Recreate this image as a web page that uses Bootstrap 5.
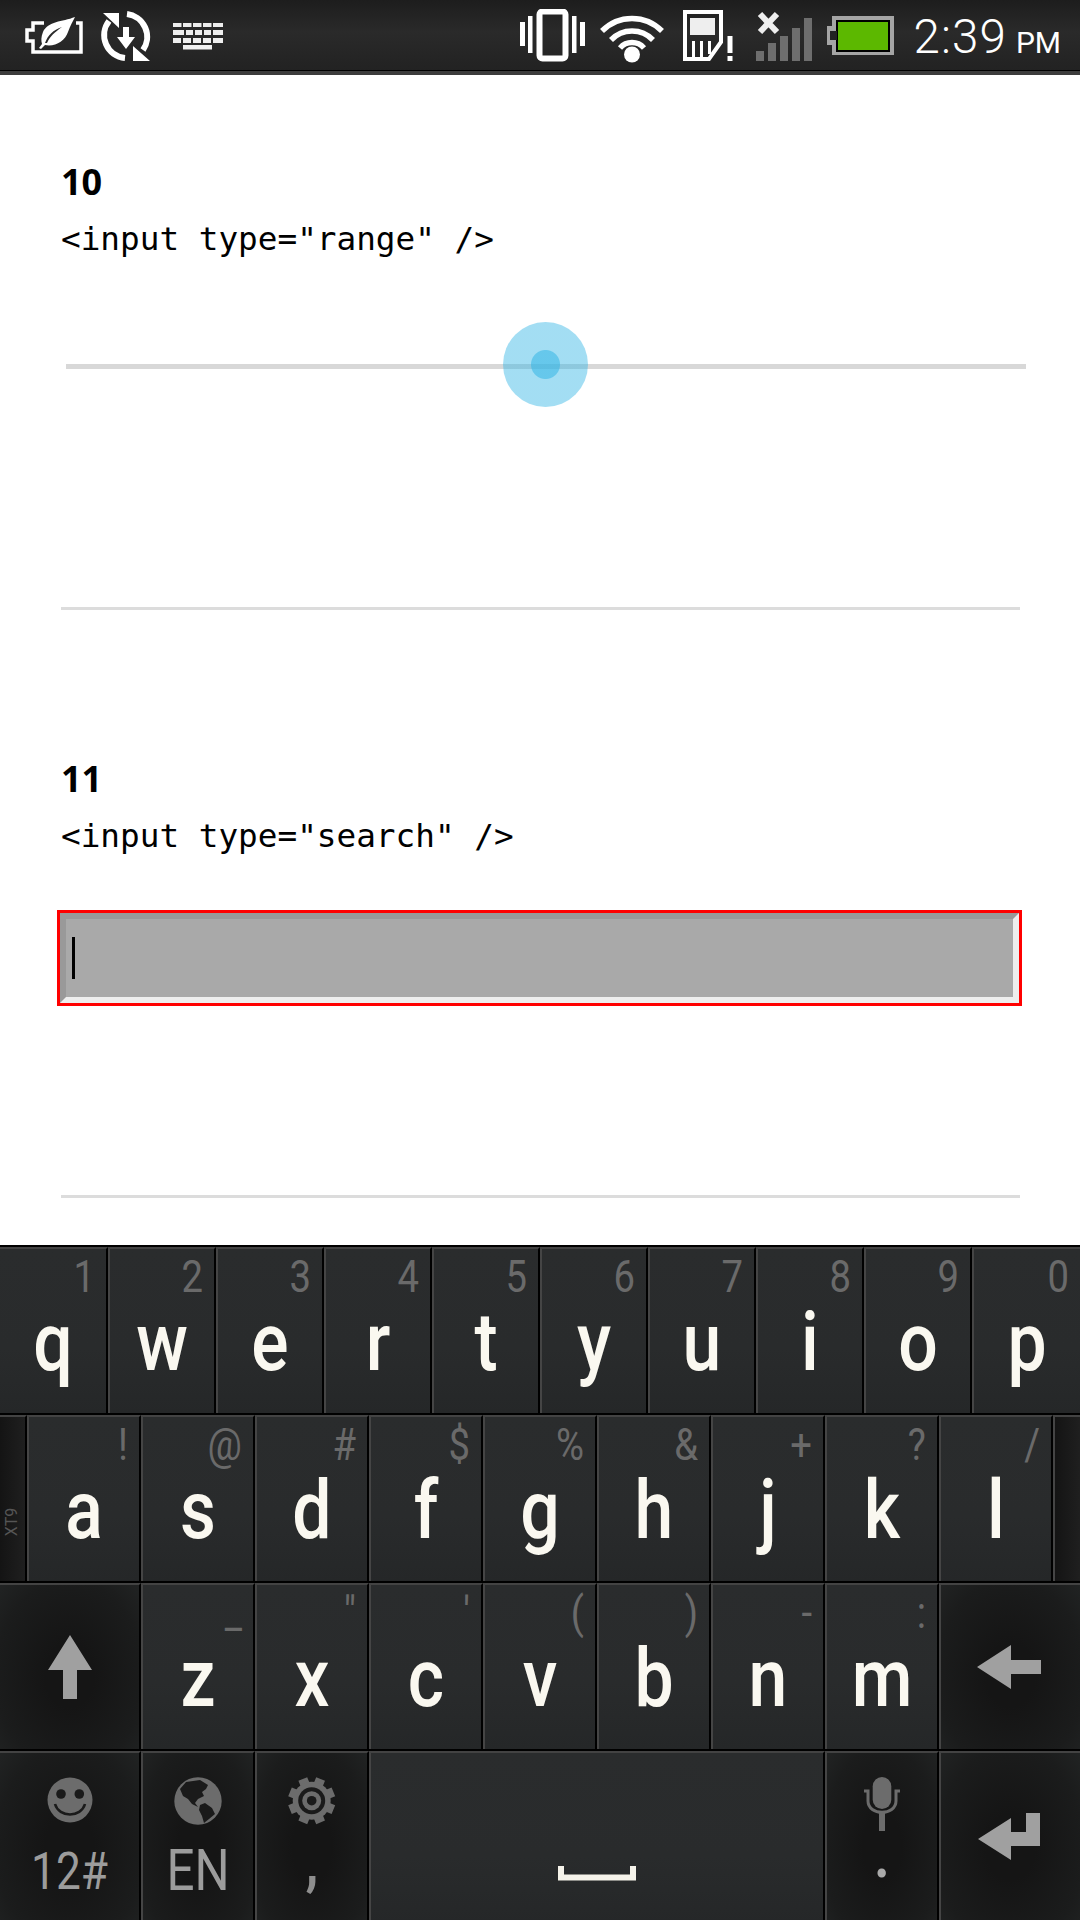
<!DOCTYPE html>
<html lang="en">
  <head>
    <meta charset="UTF-8" />
    <meta name="viewport" content="width=device-width, initial-scale=1.0" />
    <title>Input types</title>
    <link
      href="https://cdn.jsdelivr.net/npm/bootstrap@5.3.0/dist/css/bootstrap.min.css"
      rel="stylesheet"
    />
    <style>
      body {
        background: #fff;
      }
      .phone {
        width: 1080px;
        height: 1920px;
        overflow: hidden;
      }
      /* status bar */
      .sbar {
        height: 75px;
        flex: none;
        background: linear-gradient(#1d1d1d, #2a2a2a 45%, #222 100%);
        border-bottom: 4px solid #3c3c3c;
        box-shadow: inset 0 -1px 0 #000;
        position: relative;
      }
      .sbar svg {
        display: block;
        flex: none;
      }
      .ic-leaf { margin-left: 24px; }
      .ic-sync { margin-left: 15px; }
      .ic-keys { margin-left: 21px; }
      .ic-wifi { margin-left: 14px; }
      .ic-sim { margin-left: 18px; }
      .ic-signal { margin-left: 22px; }
      .ic-batt { margin-left: 14px; }
      .sbar-time {
        font-family: Roboto, sans-serif;
        font-weight: 300;
        font-size: 47.5px;
        letter-spacing: 1.1px;
        line-height: 1;
        color: #fff;
        margin-left: 18px;
        margin-right: 19px;
        white-space: nowrap;
        padding-top: 5px;
      }
      .sbar-time small {
        font-size: 30px;
        font-weight: 400;
        letter-spacing: 0;
        margin-left: 9px;
      }
      /* page content */
      .pg-body {
        padding-left: 61px;
        height: 1170px;
        flex: none;
      }
      .sec-num {
        font: 700 36px/44px "Open Sans", sans-serif;
        color: #000;
        margin: 0;
      }
      .sec-code {
        font: 400 32.7px/44px "DejaVu Sans Mono", monospace;
        color: #000;
        margin: 12.5px 0 0;
      }
      .first-num {
        padding-top: 85px;
      }
      .next-num {
        padding-top: 147px;
      }
      .rule {
        width: 959px;
        height: 3px;
        background: #dcdcdc;
        border: 0;
        opacity: 1;
        margin: 0;
      }
      .range-demo {
        -webkit-appearance: none;
        appearance: none;
        display: block;
        width: 960px;
        height: 88px;
        margin: 61.5px 0 197px 5px;
        background: transparent;
      }
      .range-demo::-webkit-slider-runnable-track {
        height: 5px;
        background: #d8d8d8;
      }
      .range-demo::-webkit-slider-thumb {
        -webkit-appearance: none;
        width: 85px;
        height: 85px;
        margin-top: -41.5px;
        border-radius: 50%;
        background: radial-gradient(
          circle,
          rgba(51, 181, 229, 0.75) 14px,
          rgba(51, 181, 229, 0.45) 15px
        );
      }
      .srch-wrap {
        width: 965px;
        height: 96px;
        margin: 52.5px 0 189px -4px;
        border: 3px solid #f00;
        position: relative;
      }
      .srch-input {
        display: block;
        width: 100%;
        height: 100%;
        border-width: 6px;
        border-style: solid;
        border-color: #999 #eee #eee #999;
        border-radius: 0;
        background: #a9a9a9;
      }
      .srch-caret {
        position: absolute;
        left: 12px;
        top: 24px;
        width: 3px;
        height: 42px;
        background: #000;
      }
      /* keyboard */
      .kbd {
        flex: none;
        font-family: Roboto, sans-serif;
        background: #000;
      }
      .kbd-row {
        border-top: 2px solid #000;
        height: 168px;
      }
      .kbd-row:last-child {
        height: 175px;
      }
      .kkey {
        flex: none;
        width: 114px;
        border-left: 2px solid #454545;
        border-right: 2px solid #000;
        border-top: 2px solid #434343;
        background: linear-gradient(#2a2c2d, #292b2c 60%, #252728);
        overflow: hidden;
      }
      .kbd-row:first-child .kkey {
        width: 108px;
      }
      .kkey:first-child {
        border-left: 0;
      }
      .kkey:last-child {
        border-right: 0;
      }
      .kkey-fn {
        background: radial-gradient(
          ellipse at 50% 55%,
          #151515 25%,
          #1b1c1c 75%,
          #212323 100%
        );
      }
      .kkey-wide {
        width: 141px !important;
      }
      .kkey-stub {
        width: 27px !important;
        background: linear-gradient(90deg, #141414, #1f1f1f);
      }
      .kkey-space {
        width: 456px !important;
      }
      .xt9-tag {
        font-size: 16px;
        color: #555;
        transform: rotate(-90deg);
        line-height: 1;
        white-space: nowrap;
        margin-bottom: 51px;
      }
      .khint {
        display: block;
        font-weight: 400;
        font-size: 45px;
        line-height: 1;
        height: 45px;
        margin-top: 5px;
        padding-right: 13px;
        text-align: right;
        color: #6a6a6a;
        transform: scaleX(0.85);
        transform-origin: right;
      }
      .kmain {
        display: block;
        font-size: 82px;
        font-weight: 500;
        line-height: 1;
        margin-top: 2px;
        text-align: center;
        color: #faf8f0;
        transform: scaleX(0.85);
      }
      .kfn-ico {
        display: block;
        margin: 24px auto 0;
      }
      .kfn-lbl {
        display: block;
        text-align: center;
        color: #9c9c9c;
        line-height: 1;
        font-weight: 400;
        transform: scaleX(0.85);
      }
      .lbl-num {
        font-size: 52px;
        margin-top: 23px;
      }
      .lbl-en {
        font-size: 58px;
        margin-top: 16px;
      }
      .lbl-punct {
        font-size: 62px;
        font-weight: 700;
        margin-top: 6px;
        color: #8e8e8e;
      }
      .lbl-dot {
        font-size: 62px;
        font-weight: 700;
        margin-top: -6px;
        color: #aaa;
      }
      .ic-space {
        margin-bottom: 43px;
      }
      .ic-back {
        margin-right: 4px;
      }
      .ic-enter {
        margin-right: 4px;
        margin-bottom: 5px;
      }
    </style>
  </head>
  <body class="m-0">
    <div class="phone d-flex flex-column">
      <div class="sbar d-flex align-items-center">
        <svg class="ic-leaf" width="61" height="52" viewBox="24 11 61 52">
          <path d="M44 24H33V31H27V42H33V53H81V24H76" fill="none" stroke="#fff" stroke-width="3.5" />
          <path d="M75 18C62 23 48 22 43 33C41 38 41 42 42 45L39 49L41 50L45 46C55 48 65 42 68 33C70 27 73 22 75 18Z" fill="#fff" />
          <path d="M45 44C48 36 53 31 62 28C55 33 50 37 47 44Z" fill="#2a2a2a" />
        </svg>
        <svg class="ic-sync" width="52" height="52" viewBox="100 11 52 52">
          <g fill="none" stroke="#fff" stroke-width="6">
            <path d="M125 59A23 23 0 0 1 109 22" />
            <path d="M127 15A23 23 0 0 1 143 51" />
          </g>
          <path d="M103 14H119V29Z M150 62H133V47Z" fill="#fff" />
          <path d="M123 28H129V38H135L126 50L117 38H123Z" fill="#fff" />
        </svg>
        <svg class="ic-keys" width="50" height="28" viewBox="173 24 50 28">
          <g fill="#eee">
            <rect x="173" y="25" width="8.5" height="4" /><rect x="183" y="25" width="8.5" height="4" /><rect x="193" y="25" width="8.5" height="4" /><rect x="203" y="25" width="8.5" height="4" /><rect x="213" y="25" width="10" height="4" />
            <rect x="173" y="32" width="11" height="5" /><rect x="186" y="32" width="7" height="5" /><rect x="195" y="32" width="7" height="5" /><rect x="204" y="32" width="7" height="5" /><rect x="213" y="32" width="10" height="5" />
            <rect x="173" y="40" width="8" height="5" /><rect x="183" y="40" width="8" height="5" /><rect x="193" y="40" width="8" height="5" /><rect x="203" y="40" width="8" height="5" /><rect x="213" y="40" width="10" height="5" />
            <rect x="183" y="47" width="29" height="4.5" />
          </g>
        </svg>
        <svg class="ms-auto" width="65" height="53" viewBox="521 12 65 53">
          <rect x="540.5" y="14.5" width="26" height="47" rx="3" fill="none" stroke="#fff" stroke-width="6" />
          <g fill="#fff">
            <rect x="521" y="25" width="5" height="24" /><rect x="529" y="19" width="4.5" height="37" />
            <rect x="573" y="19" width="4.5" height="37" /><rect x="581" y="25" width="5" height="24" />
          </g>
        </svg>
        <svg class="ic-wifi" width="66" height="54" viewBox="599 10 66 54">
          <g fill="none" stroke="#fff" stroke-width="5.5">
            <path d="M602 32A42 42 0 0 1 662 32" />
            <path d="M611 41A29 29 0 0 1 653 41" />
            <path d="M620 49A16 16 0 0 1 644 49" />
          </g>
          <circle cx="632" cy="55.5" r="8" fill="#fff" />
        </svg>
        <svg class="ic-sim" width="51" height="53" viewBox="683 11 51 53">
          <path d="M685 14H721V44L709 61H685Z" fill="none" stroke="#fff" stroke-width="4" />
          <rect x="690" y="20" width="25" height="17" fill="#eee" />
          <g fill="#fff">
            <rect x="692" y="43" width="3" height="17" /><rect x="700" y="43" width="3" height="17" /><rect x="708" y="43" width="3" height="13" />
            <rect x="727.5" y="38" width="5" height="17" /><rect x="727.5" y="58" width="5" height="5" />
          </g>
        </svg>
        <svg class="ic-signal" width="57" height="52" viewBox="756 10 57 52">
          <g fill="#6e6e6e">
            <rect x="756" y="51" width="8" height="10" /><rect x="768" y="43" width="8" height="18" /><rect x="780" y="36" width="8" height="25" /><rect x="792" y="28" width="8" height="33" /><rect x="804" y="18" width="8" height="43" />
          </g>
          <path d="M760 14L777 32M777 14L760 32" stroke="#eee" stroke-width="6" fill="none" />
        </svg>
        <svg class="ic-batt" width="68" height="40" viewBox="827 18 68 40">
          <path d="M832 18H894V57H832V47H827V28H832Z" fill="#a5a5a5" />
          <rect x="836" y="22" width="54" height="32" fill="#000" />
          <rect x="830" y="33" width="7" height="9" fill="#222" />
          <rect x="838" y="24" width="50" height="28" fill="#5cb800" />
        </svg>
        <div class="sbar-time">2:39<small>PM</small></div>
      </div>

      <div class="pg-body">
        <section>
          <h2 class="sec-num first-num">10</h2>
          <p class="sec-code">&lt;input type="range" /&gt;</p>
          <input class="range-demo" type="range" min="0" max="100" step="0.1" value="49.9" />
          <hr class="rule" />
        </section>
        <section>
          <h2 class="sec-num next-num">11</h2>
          <p class="sec-code">&lt;input type="search" /&gt;</p>
          <div class="srch-wrap">
            <input class="srch-input" type="search" />
            <span class="srch-caret"></span>
          </div>
          <hr class="rule" />
        </section>
      </div>

      <div class="kbd">
        <div class="kbd-row d-flex">
          <div class="kkey"><span class="khint">1</span><span class="kmain">q</span></div>
          <div class="kkey"><span class="khint">2</span><span class="kmain">w</span></div>
          <div class="kkey"><span class="khint">3</span><span class="kmain">e</span></div>
          <div class="kkey"><span class="khint">4</span><span class="kmain">r</span></div>
          <div class="kkey"><span class="khint">5</span><span class="kmain">t</span></div>
          <div class="kkey"><span class="khint">6</span><span class="kmain">y</span></div>
          <div class="kkey"><span class="khint">7</span><span class="kmain">u</span></div>
          <div class="kkey"><span class="khint">8</span><span class="kmain">i</span></div>
          <div class="kkey"><span class="khint">9</span><span class="kmain">o</span></div>
          <div class="kkey"><span class="khint">0</span><span class="kmain">p</span></div>
        </div>
        <div class="kbd-row d-flex">
          <div class="kkey kkey-stub d-flex align-items-end justify-content-center"><span class="xt9-tag">XT9</span></div>
          <div class="kkey"><span class="khint">!</span><span class="kmain">a</span></div>
          <div class="kkey"><span class="khint">@</span><span class="kmain">s</span></div>
          <div class="kkey"><span class="khint">#</span><span class="kmain">d</span></div>
          <div class="kkey"><span class="khint">$</span><span class="kmain">f</span></div>
          <div class="kkey"><span class="khint">%</span><span class="kmain">g</span></div>
          <div class="kkey"><span class="khint">&amp;</span><span class="kmain">h</span></div>
          <div class="kkey"><span class="khint">+</span><span class="kmain">j</span></div>
          <div class="kkey"><span class="khint">?</span><span class="kmain">k</span></div>
          <div class="kkey"><span class="khint">/</span><span class="kmain">l</span></div>
          <div class="kkey kkey-stub"></div>
        </div>
        <div class="kbd-row d-flex">
          <div class="kkey kkey-wide kkey-fn d-flex align-items-center justify-content-center">
            <svg width="44" height="64" viewBox="48 1635 44 64"><path d="M70 1635L92 1670H77V1699H63V1670H48Z" fill="#a0a0a0" /></svg>
          </div>
          <div class="kkey"><span class="khint">_</span><span class="kmain">z</span></div>
          <div class="kkey"><span class="khint">"</span><span class="kmain">x</span></div>
          <div class="kkey"><span class="khint">'</span><span class="kmain">c</span></div>
          <div class="kkey"><span class="khint">(</span><span class="kmain">v</span></div>
          <div class="kkey"><span class="khint">)</span><span class="kmain">b</span></div>
          <div class="kkey"><span class="khint">-</span><span class="kmain">n</span></div>
          <div class="kkey"><span class="khint">:</span><span class="kmain">m</span></div>
          <div class="kkey kkey-wide kkey-fn d-flex align-items-center justify-content-center">
            <svg class="ic-back" width="64" height="44" viewBox="977 1645 64 44"><path d="M977 1667L1011 1645V1660H1041V1674H1011V1689Z" fill="#a0a0a0" /></svg>
          </div>
        </div>
        <div class="kbd-row d-flex">
          <div class="kkey kkey-wide kkey-fn">
            <svg class="kfn-ico" width="46" height="46" viewBox="47 1779 46 46">
              <circle cx="70" cy="1802" r="22.5" fill="#6c6c6c" />
              <circle cx="61" cy="1796" r="4.8" fill="#1a1a1a" /><circle cx="79.3" cy="1796" r="4.8" fill="#1a1a1a" />
              <path d="M55 1806C59 1820 81 1820 85 1806" fill="none" stroke="#1a1a1a" stroke-width="2.6" />
            </svg>
            <span class="kfn-lbl lbl-num">12#</span>
          </div>
          <div class="kkey kkey-fn">
            <svg class="kfn-ico" width="48" height="48" viewBox="174 1778 48 48">
              <circle cx="198" cy="1802" r="23.7" fill="#6c6c6c" />
              <path d="M180 1790L186 1783L200 1781L208 1786L206 1790L202 1793L204 1797L198 1800L195 1804L198 1808L192 1805L188 1800L183 1797Z" fill="#1a1a1a" />
              <path d="M200 1806L205 1804L212 1809L215 1815L209 1820L204 1824L202 1817L199 1811Z" fill="#1a1a1a" />
            </svg>
            <span class="kfn-lbl lbl-en">EN</span>
          </div>
          <div class="kkey kkey-fn">
            <svg class="kfn-ico" width="48" height="48" viewBox="288 1778 48 48">
              <g stroke="#6c6c6c" stroke-width="9.5">
                <path d="M302.8 1780L320.6 1823.4M320.6 1780L302.8 1823.4M290 1792.8L333.4 1810.6M290 1810.6L333.4 1792.8" />
              </g>
              <circle cx="311.7" cy="1801.7" r="19" fill="#6c6c6c" />
              <circle cx="311.7" cy="1801.7" r="13.5" fill="#1a1a1a" />
              <circle cx="311.7" cy="1801.7" r="9.5" fill="#6c6c6c" />
              <circle cx="311.7" cy="1801.7" r="4.8" fill="#1a1a1a" />
            </svg>
            <span class="kfn-lbl lbl-punct">,</span>
          </div>
          <div class="kkey kkey-space d-flex justify-content-center">
            <svg class="mt-auto ic-space" width="78" height="15" viewBox="558 1865 78 15">
              <path d="M561 1865V1876.5H633V1865" fill="none" stroke="#f5f3ea" stroke-width="6" />
            </svg>
          </div>
          <div class="kkey kkey-fn">
            <svg class="kfn-ico" width="36" height="54" viewBox="864 1779 36 54">
              <rect x="872.7" y="1779" width="18.6" height="32" rx="9.3" fill="#6c6c6c" />
              <path d="M864 1793H868V1803C868 1818 896 1818 896 1803V1793H900" fill="none" stroke="#6c6c6c" stroke-width="3" />
              <rect x="879" y="1814" width="6" height="19" fill="#6c6c6c" />
            </svg>
            <span class="kfn-lbl lbl-dot">.</span>
          </div>
          <div class="kkey kkey-wide kkey-fn d-flex align-items-center justify-content-center">
            <svg class="ic-enter" width="62" height="47" viewBox="978 1812 62 47"><path d="M978 1838L1011 1817V1831H1026V1812H1040V1845H1011V1859Z" fill="#a0a0a0" /></svg>
          </div>
        </div>
      </div>
    </div>
    <script src="https://cdn.jsdelivr.net/npm/bootstrap@5.3.0/dist/js/bootstrap.bundle.min.js"></script>
  </body>
</html>
